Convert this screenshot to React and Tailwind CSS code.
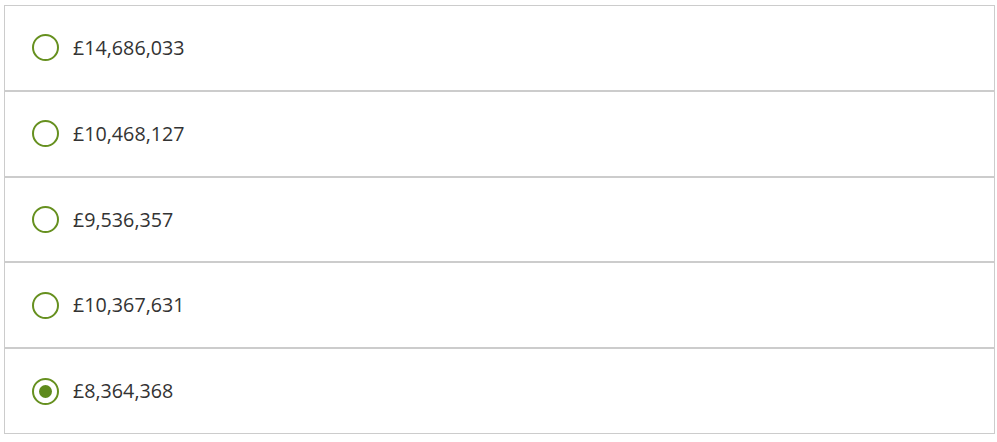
import React, { useState } from 'react';

const options = ['£14,686,033', '£10,468,127', '£9,536,357', '£10,367,631', '£8,364,368'];

function Radio({ checked }) {
  return (
    <span className="w-[27px] h-[27px] rounded-full border-2 border-[#66901f] flex items-center justify-center shrink-0">
      {checked && <span className="w-[13px] h-[13px] rounded-full bg-[#5e8a1c]"></span>}
    </span>
  );
}

export default function App() {
  const [selected, setSelected] = useState(4);
  return (
    <div className="w-[997px] h-[442px] bg-white pt-[5px] pl-[4px]" style={{ fontFamily: '"Open Sans", sans-serif' }}>
      <div className="w-[991px] flex flex-col">
        {options.map((opt, i) => (
          <label
            key={opt}
            onClick={() => setSelected(i)}
            className="h-[85.8px] border border-[#cccccc] flex items-center pl-[27px] gap-[14px] cursor-pointer"
          >
            <Radio checked={selected === i} />
            <span className="text-[19.7px] text-[#333333] leading-none">{opt}</span>
          </label>
        ))}
      </div>
    </div>
  );
}
